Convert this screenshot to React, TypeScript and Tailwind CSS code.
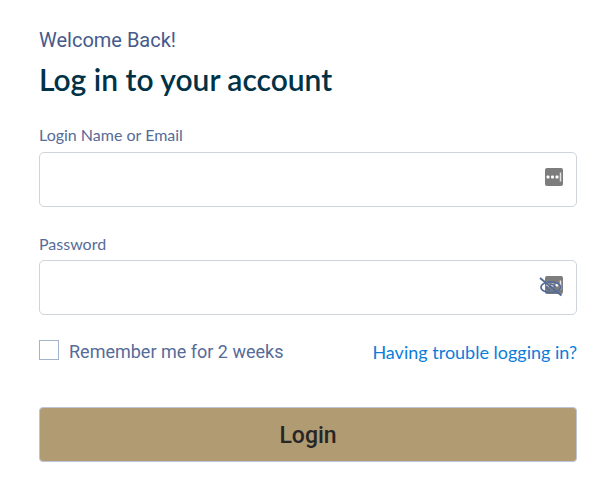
import { useState } from 'react'

function FillIcon() {
  return (
    <svg viewBox="0 0 18 18" className="block size-[18px]" aria-hidden="true">
      <rect width="18" height="18" rx="2" fill="#7d7d7d" />
      <rect x="1.500" y="7.500" width="3" height="3" rx="1" fill="#fff" />
      <rect x="6" y="7.500" width="3" height="3" rx="1" fill="#fff" />
      <rect x="10.500" y="7.500" width="3" height="3" rx="1" fill="#fff" />
      <path d="M15.500 4.500v9" stroke="#e4e4e4" strokeWidth="1.500" />
    </svg>
  )
}

function EyeOffIcon() {
  return (
    <svg viewBox="0 0 24 20" className="block h-[20px] w-[24px]" fill="none" stroke="#536a9b" strokeWidth="1.700" aria-hidden="true">
      <path d="M1 1l21.500 17.500" strokeWidth="2" />
      <path d="M6 6C3.500 7 2 8.500 2 10.200c0 3.100 4.300 5.300 9.500 5.300 1.800 0 3.500-.3 4.900-.8M9 5.200c1-.2 2-.3 3-.3 5.200 0 9.500 2.300 9.500 5.300 0 1.300-.8 2.400-2.100 3.400" />
      <path d="M8 9c-.8 2.200.8 4 3.500 4M12 7.500c2.500 0 4 1.200 4 3" />
    </svg>
  )
}

export default function App() {
  const [showPassword, setShowPassword] = useState(false)

  return (
    <main className="min-h-screen bg-white pt-[25px] pr-[34px] pb-[27px] pl-[39px] font-['Lato',sans-serif]">
      <p className="font-['Roboto',sans-serif] text-[20px] leading-[30px] text-[#465a8c]">Welcome Back!</p>
      <h1 className="mt-[4px] text-[30px] leading-[40px] font-semibold text-[#003247]">Log in to your account</h1>

      <form onSubmit={(e) => e.preventDefault()}>
        <label htmlFor="login" className="mt-[24px] block text-[16px] leading-[24px] text-[#566b98]">
          Login Name or Email
        </label>
        <div className="relative mt-[5px]">
          <input
            id="login"
            type="text"
            className="block h-[55px] w-full rounded-[5px] border border-[#ced4da] px-4 pr-12"
          />
          <span className="absolute top-[16px] right-[14px]">
            <FillIcon />
          </span>
        </div>

        <label htmlFor="password" className="mt-[25px] block text-[16px] leading-[24px] text-[#566b98]">
          Password
        </label>
        <div className="relative mt-[4px]">
          <input
            id="password"
            type={showPassword ? 'text' : 'password'}
            className="block h-[55px] w-full rounded-[5px] border border-[#ced4da] px-4 pr-12"
          />
          <span className="absolute top-[16px] right-[14px]">
            <FillIcon />
          </span>
          <button
            type="button"
            aria-label="Show password"
            onClick={() => setShowPassword(!showPassword)}
            className="absolute top-[17px] right-[14px]"
          >
            <EyeOffIcon />
          </button>
        </div>

        <div className="mt-[25px] flex items-start justify-between">
          <label className="flex items-start gap-[10px] font-['Roboto',sans-serif] text-[18px] leading-[24px] text-[#566b98]">
            <input type="checkbox" className="size-5 appearance-none border border-[#a3b3cd] bg-white" />
            Remember me for 2 weeks
          </label>
          <a href="#" className="text-[18px] leading-[24px] text-[#0c7ddb]">
            Having trouble logging in?
          </a>
        </div>

        <button
          type="submit"
          className="mt-[43px] h-[55px] w-full rounded-[4px] border border-[#bcc5d6] bg-[#b19b72] pt-[3px] font-['Roboto',sans-serif] text-[23px] font-medium text-[#262626]"
        >
          Login
        </button>
      </form>
    </main>
  )
}
